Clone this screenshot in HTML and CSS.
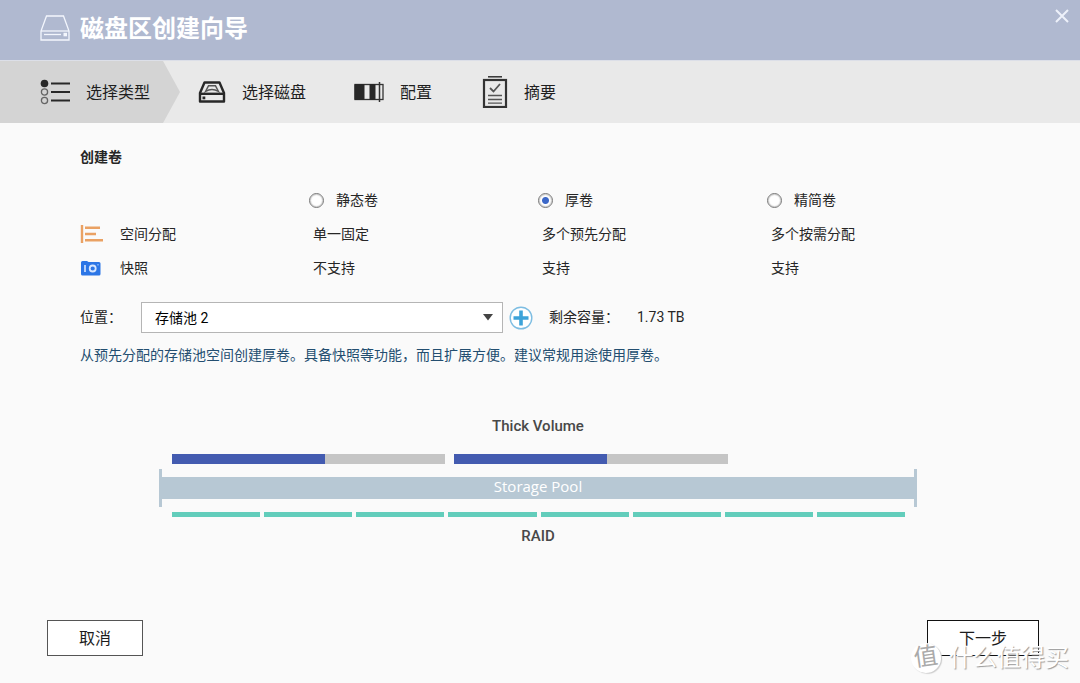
FILE: index.html
```html
<!DOCTYPE html>
<html lang="zh-CN">
<head>
<meta charset="utf-8">
<meta name="viewport" content="width=device-width, initial-scale=1">
<title>磁盘区创建向导</title>
<link rel="stylesheet" href="styles.css">
</head>
<body>
<header class="titlebar">
  <svg class="title-icon" width="30" height="26" viewBox="0 0 30 26" fill="none" stroke="currentColor" aria-hidden="true">
    <path d="M6.500 1H23.500L29 16V25H1V16Z" stroke-width="1.3"/>
    <path d="M1 16H29" stroke-width="1.3"/>
    <path d="M4 19.500H21" stroke-width="1.300"/>
    <rect x="23.500" y="17.800" width="3.500" height="3.500" fill="currentColor" stroke="none"/>
  </svg>
  <h1 class="title">磁盘区创建向导</h1>
  <button class="close" type="button" aria-label="关闭">
    <svg width="14" height="14" viewBox="0 0 14 14" fill="none" stroke="currentColor" stroke-width="2"><path d="M1 1L13 13M13 1L1 13"/></svg>
  </button>
</header>

<ol class="steps">
  <li class="step step-active" aria-current="step">
    <svg width="30" height="26" viewBox="0 0 30 26" fill="none" stroke="#282828" aria-hidden="true">
      <circle cx="4.500" cy="4.500" r="3.800" fill="#282828" stroke="none"/>
      <circle cx="4.500" cy="13" r="3.100" stroke="#666" stroke-width="1.300"/>
      <circle cx="4.500" cy="21.500" r="3.100" stroke="#666" stroke-width="1.300"/>
      <path d="M11 4.500H30M11 13H30M11 21.500H30" stroke-width="2.200"/>
    </svg>
    <span>选择类型</span>
  </li>
  <li class="step">
    <svg width="28" height="22" viewBox="0 0 28 22" fill="none" stroke="#282828" aria-hidden="true">
      <path d="M6.500 1.500H21.500L26 12V20.500H2V12Z" stroke-width="2.400" stroke-linejoin="round"/>
      <path d="M2 12.800H26" stroke-width="2.400"/>
      <path d="M10.500 4.800H17.500L20.500 10.500Q14 6.500 7.500 10.500Z" stroke="#555" stroke-width="1.400"/>
      <rect x="4.500" y="15.500" width="2.800" height="2.800" fill="#282828" stroke="none"/>
    </svg>
    <span>选择磁盘</span>
  </li>
  <li class="step">
    <svg width="30" height="20" viewBox="0 0 30 20" fill="none" stroke="#333" aria-hidden="true">
      <rect x="1" y="2.500" width="28" height="15" stroke-width="1.300"/>
      <path d="M1 2.500H10V17.500H1ZM16 2.500H21V17.500H16Z" fill="#282828" stroke="#282828"/>
      <path d="M25.500 0V20" stroke-width="1.500"/>
    </svg>
    <span>配置</span>
  </li>
  <li class="step">
    <svg width="28" height="32" viewBox="0 0 28 32" fill="none" stroke="#333" aria-hidden="true">
      <path d="M8 .8H22" stroke-width="1.500"/>
      <rect x="4" y="4" width="22" height="27" stroke-width="2.200"/>
      <path d="M10 12L13.500 15.500L20 8" stroke="#555" stroke-width="1.800"/>
      <path d="M8 19.500H22M8 23.500H22M8 27.200H22" stroke="#555" stroke-width="1.300"/>
    </svg>
    <span>摘要</span>
  </li>
</ol>

<main class="content">
  <h2 class="heading">创建卷</h2>
  <table class="types">
    <thead>
      <tr>
        <td></td>
        <th scope="col"><label class="choice"><input type="radio" name="volume">静态卷</label></th>
        <th scope="col"><label class="choice"><input type="radio" name="volume" checked>厚卷</label></th>
        <th scope="col"><label class="choice"><input type="radio" name="volume">精简卷</label></th>
      </tr>
    </thead>
    <tbody>
      <tr>
        <th scope="row"><span class="feature">
          <svg width="24" height="18" viewBox="0 0 24 18" fill="none" stroke="#eaa163" stroke-width="2.400" aria-hidden="true"><path d="M2 0V18M5 2.800H20M5 9H16M5 15.300H23"/></svg>
          空间分配</span></th>
        <td>单一固定</td><td>多个预先分配</td><td>多个按需分配</td>
      </tr>
      <tr>
        <th scope="row"><span class="feature">
          <svg width="24" height="16" viewBox="0 0 24 16" fill="none" aria-hidden="true">
            <path d="M2.500 1H7L8.500 2H19Q20.500 2 20.500 3.500V14Q20.500 15.500 19 15.500H2.500Q1 15.500 1 14V2.500Q1 1 2.500 1Z" fill="#2c76e6"/>
            <path d="M5 5V12" stroke="#d6e6ff" stroke-width="1.600"/>
            <circle cx="12.700" cy="8.500" r="3" stroke="#d6e6ff" stroke-width="1.800"/>
            <rect x="17" y="4" width="2" height="1.500" fill="#6fa4f2"/>
          </svg>
          快照</span></th>
        <td>不支持</td><td>支持</td><td>支持</td>
      </tr>
    </tbody>
  </table>

  <div class="location">
    <label class="location-label" for="pool">位置：</label>
    <div class="picker">
      <select id="pool" class="pool-select"><option>存储池 2</option></select>
      <svg class="picker-arrow" width="12" height="7" viewBox="0 0 12 7" aria-hidden="true"><path d="M1 0H11L6 6.500Z" fill="#444"/></svg>
    </div>
    <button class="add" type="button" aria-label="新建存储池">
      <svg width="24" height="24" viewBox="0 0 24 24" fill="none"><circle cx="12" cy="12" r="10.800" fill="#fff" stroke="#7dbde2" stroke-width="1.400"/><path d="M12 4.500V19.500M4.500 12H19.500" stroke="#3da3d9" stroke-width="3.600"/></svg>
    </button>
    <span class="free">剩余容量：</span>
    <span class="free-value">1.73 TB</span>
  </div>
  <p class="description">从预先分配的存储池空间创建厚卷。具备快照等功能，而且扩展方便。建议常规用途使用厚卷。</p>

  <figure class="diagram">
    <figcaption class="diagram-label">Thick Volume</figcaption>
    <div class="volumes"><div class="volume"></div><div class="volume"></div></div>
    <div class="pool"><div class="pool-bar">Storage Pool</div></div>
    <div class="raid"><i></i><i></i><i></i><i></i><i></i><i></i><i></i><i></i></div>
    <div class="diagram-label raid-label">RAID</div>
  </figure>
</main>

<footer class="actions">
  <button class="action cancel" type="button">取消</button>
  <button class="action next" type="button">下一步</button>
</footer>
<div class="watermark"><span class="watermark-badge">值</span><span>什么值得买</span></div>
</body>
</html>
```

FILE: styles.css
```css
* { box-sizing: border-box; }

body {
  position: relative;
  display: flex;
  flex-direction: column;
  min-height: 100vh;
  margin: 0;
  background: #fafafa;
  color: #262626;
  font: 14px/20px Roboto, "Noto Sans CJK SC", sans-serif;
}

button, select { font: inherit; color: inherit; }

h1, h2, p, ol, figure { margin: 0; padding: 0; }

.titlebar {
  display: flex;
  align-items: center;
  gap: 10px;
  height: 60px;
  padding: 0 11px 4px 40px;
  background: #b0b9d0;
  color: #fff;
}

.title-icon { color: #f3f6fd; }

.title {
  padding-top: 2px;
  font-size: 24px;
  line-height: 32px;
  font-weight: 700;
}

.close {
  display: flex;
  align-self: flex-start;
  margin: 9px 0 0 auto;
  padding: 0;
  border: 0;
  background: none;
  color: #edf1fa;
}

.steps {
  display: flex;
  height: 63px;
  border-top: 1px solid #dcdfe8;
  background: #e9e9e9;
  list-style: none;
  font-size: 16px;
  color: #1f1f1f;
}

.step {
  display: flex;
  align-items: center;
  gap: 16px;
  padding: 0 30px 0 18px;
}

.step span { padding-top: 2px; }

.step-active {
  padding-left: 40px;
  background: #d4d4d4;
  clip-path: polygon(0 0, calc(100% - 17px) 0, 100% 50%, calc(100% - 17px) 100%, 0 100%);
}

.content {
  flex: 1;
  padding: 24px 84px 0 80px;
}

.heading {
  font-size: 14px;
  font-weight: 700;
}

.types {
  width: 100%;
  margin-top: 16px;
  table-layout: fixed;
  border-collapse: collapse;
}

.types th, .types td {
  height: 34px;
  padding: 0;
  text-align: left;
  font-weight: 400;
}

.types tbody td { padding-left: 4px; }

.choice {
  display: flex;
  align-items: center;
  gap: 12px;
}

.choice input {
  appearance: none;
  width: 15px;
  height: 15px;
  margin: 0;
  border: 1px solid #777;
  border-radius: 50%;
  background: #fff;
  box-shadow: inset 0 0 1px 1px #ccc;
}

.choice input:checked { background: radial-gradient(circle, #3c68c8 3px, #fff 4px); }

.feature {
  display: flex;
  align-items: center;
  gap: 16px;
}

.location {
  display: flex;
  align-items: center;
  margin-top: 17px;
}

.location-label { flex: 0 0 61px; }

.location-label, .free, .free-value { padding-bottom: 2px; }

.picker {
  position: relative;
  flex: 0 1 362px;
}

.pool-select {
  display: block;
  appearance: none;
  width: 100%;
  height: 31px;
  padding: 0 32px 0 13px;
  border: 1px solid #b5b5b5;
  border-radius: 0;
  background: #fff;
  color: #000;
}

.picker-arrow {
  position: absolute;
  top: 12px;
  right: 9px;
}

.add {
  display: flex;
  margin: 0 16px 0 6px;
  padding: 0;
  border: 0;
  background: none;
}

.free-value { margin-left: 18px; }

.description {
  margin-top: 12px;
  color: #234e70;
}

.diagram {
  max-width: 758px;
  margin: 51px auto 0;
}

.diagram-label {
  font-size: 15px;
  font-weight: 500;
  text-align: center;
  color: #484848;
}

.volumes {
  display: flex;
  gap: 9px;
  margin-top: 18px;
  padding: 0 12px 0 13px;
}

.volume {
  width: 37.3%;
  height: 10px;
  background: linear-gradient(90deg, #435bb0 56%, #c5c5c5 56%);
}

.pool {
  margin-top: 5px;
  padding: 8px 0;
  border: solid #b7c8d4;
  border-width: 0 3px;
}

.pool-bar {
  padding-bottom: 4px;
  background: #b7c8d4;
  color: #fff;
  font: 15px/18px "Open Sans", sans-serif;
  text-align: center;
}

.raid {
  display: flex;
  gap: 4px;
  margin-top: 5px;
  padding: 0 12px 0 13px;
}

.raid i {
  flex: 1;
  height: 5px;
  background: #62cdbb;
}

.raid-label { margin-top: 9px; }

.actions {
  display: flex;
  justify-content: space-between;
  padding: 0 41px 27px 47px;
}

.action {
  height: 36px;
  padding: 2px 31px 0;
  border: 1px solid #555;
  background: #fff;
  font-size: 16px;
  color: #1c1c1c;
}

.next { border-color: #111; }

.watermark {
  position: absolute;
  right: 11px;
  bottom: 9px;
  display: flex;
  align-items: center;
  gap: 8px;
  color: #fff;
  font-size: 24px;
  line-height: 32px;
  text-shadow: 1px 1px 1px #999;
  pointer-events: none;
}

.watermark-badge {
  width: 30px;
  height: 30px;
  border-radius: 50%;
  background: #fff;
  box-shadow: 1px 1px 1px #ccc;
  color: #aaa;
  line-height: 29px;
  text-align: center;
  text-shadow: none;
  transform: rotate(-8deg);
}
```
